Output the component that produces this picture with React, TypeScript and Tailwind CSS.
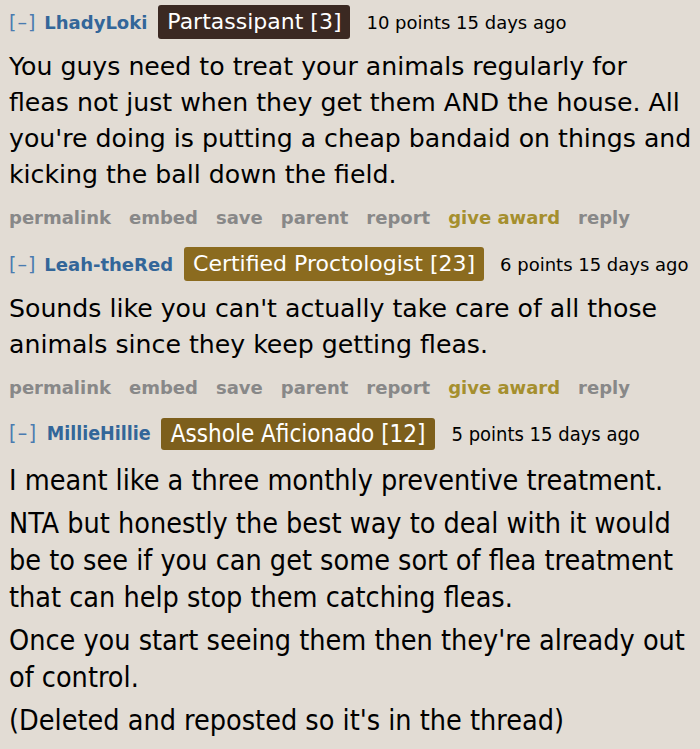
import React from 'react';

type Comment = {
  user: string;
  flair: string;
  flairClass: string;
  meta: string;
  paragraphs: string[][];
  actions: boolean;
  condensed: boolean;
};

const comments: Comment[] = [
  {
    user: 'LhadyLoki',
    flair: 'Partassipant [3]',
    flairClass: 'bg-[#3b2922]',
    meta: '10 points 15 days ago',
    paragraphs: [
      [
        'You guys need to treat your animals regularly for',
        'fleas not just when they get them AND the house. All',
        "you're doing is putting a cheap bandaid on things and",
        'kicking the ball down the field.',
      ],
    ],
    actions: true,
    condensed: false,
  },
  {
    user: 'Leah-theRed',
    flair: 'Certified Proctologist [23]',
    flairClass: 'bg-[#8b6b1f]',
    meta: '6 points 15 days ago',
    paragraphs: [["Sounds like you can't actually take care of all those", 'animals since they keep getting fleas.']],
    actions: true,
    condensed: false,
  },
  {
    user: 'MillieHillie',
    flair: 'Asshole Aficionado [12]',
    flairClass: 'bg-[#7d5f1c]',
    meta: '5 points 15 days ago',
    paragraphs: [
      ['I meant like a three monthly preventive treatment.'],
      [
        'NTA but honestly the best way to deal with it would',
        'be to see if you can get some sort of flea treatment',
        'that can help stop them catching fleas.',
      ],
      ["Once you start seeing them then they're already out", 'of control.'],
      ["(Deleted and reposted so it's in the thread)"],
    ],
    actions: false,
    condensed: true,
  },
];

const actionLinks = ['permalink', 'embed', 'save', 'parent', 'report', 'give award', 'reply'];

function Lines({ lines }: { lines: string[] }) {
  return (
    <>
      {lines.map((l, i) => (
        <React.Fragment key={i}>
          {l}
          {i < lines.length - 1 && <br />}
        </React.Fragment>
      ))}
    </>
  );
}

function CommentBlock({ c }: { c: Comment }) {
  if (c.condensed) {
    return (
      <div className="font-['DejaVu_Sans_Condensed','DejaVu_Sans',sans-serif] text-black">
        <div className="flex items-center h-[34px]">
          <span className="text-[21px] text-[#4a7bb0] tracking-[1.5px] mr-[9px]">[–]</span>
          <span className="text-[19.5px] font-bold text-[#336699]">{c.user}</span>
          <span className={`${c.flairClass} text-white text-[24px] leading-none ml-[10px] px-[10px] py-[4px] rounded-[3px]`}>
            {c.flair}
          </span>
          <span className="text-[20px] ml-[16px]">{c.meta}</span>
        </div>
        <div className="mt-[11px] flex flex-col gap-[6px]">
          {c.paragraphs.map((p, i) => (
            <p key={i} className="text-[28.5px] leading-[37px] whitespace-nowrap">
              <Lines lines={p} />
            </p>
          ))}
        </div>
      </div>
    );
  }
  return (
    <div className="font-['DejaVu_Sans',Verdana,sans-serif] text-black">
      <div className="flex items-center h-[34px]">
        <span className="text-[19px] text-[#4a7bb0] tracking-[1px] mr-[8px]">[–]</span>
        <span className="text-[18px] font-bold text-[#336699]">{c.user}</span>
        <span className={`${c.flairClass} text-white text-[22px] leading-none ml-[11px] px-[9px] py-[6px] rounded-[3px]`}>
          {c.flair}
        </span>
        <span className="text-[18px] ml-[16px]">{c.meta}</span>
      </div>
      <div className="mt-[10px] flex flex-col">
        {c.paragraphs.map((p, i) => (
          <p key={i} className="text-[25.2px] leading-[36px] whitespace-nowrap">
            <Lines lines={p} />
          </p>
        ))}
      </div>
      {c.actions && (
        <div className="flex gap-[18px] text-[18px] font-bold text-[#888888] mt-[8px] h-[32px] items-center">
          {actionLinks.map((a) => (
            <span key={a} className={a === 'give award' ? 'text-[#a58f2e]' : ''}>
              {a}
            </span>
          ))}
        </div>
      )}
    </div>
  );
}

export default function App() {
  return (
    <div className="w-[700px] h-[749px] bg-[#e2dcd4] pl-[9px] pt-[5px] overflow-hidden flex flex-col gap-[14px]">
      {comments.map((c) => (
        <CommentBlock key={c.user} c={c} />
      ))}
    </div>
  );
}
